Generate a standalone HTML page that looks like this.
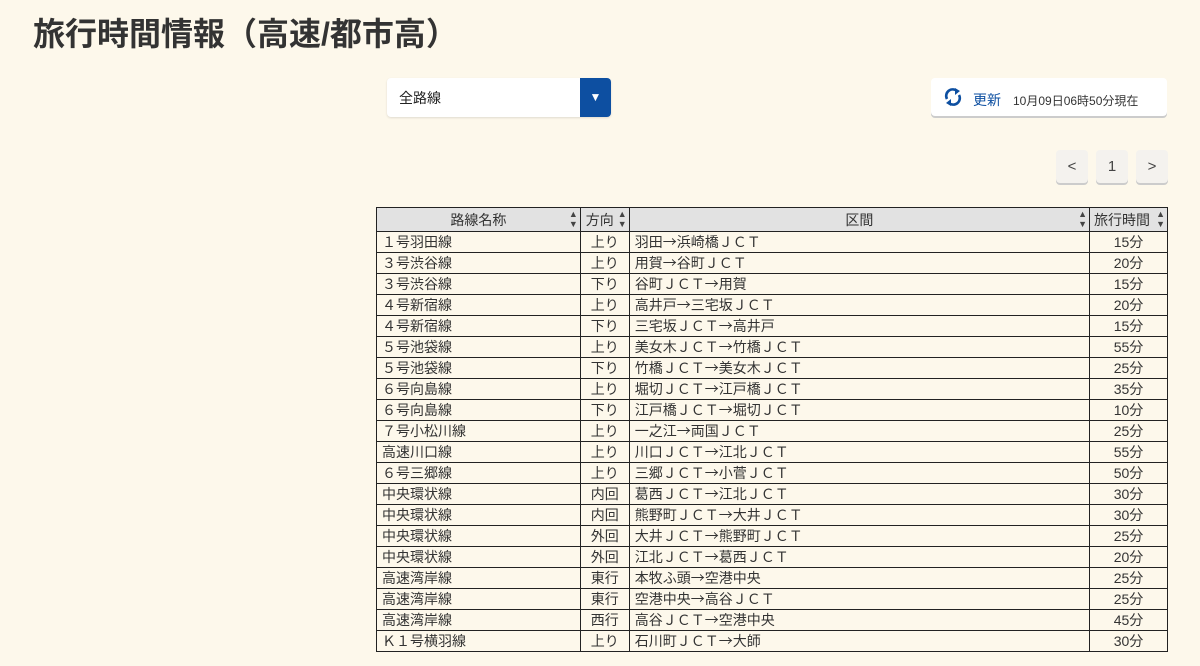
<!DOCTYPE html>
<html><head><meta charset="utf-8"><style>
body{margin:0;width:1200px;height:666px;background:#fdf8eb;font-family:"Liberation Sans","Noto Sans CJK JP",sans-serif;color:#333;position:relative;overflow:hidden}
h1{position:absolute;left:33px;top:9px;margin:0;font-size:32px;font-weight:bold;color:#333;letter-spacing:0}
.sel{position:absolute;left:387px;top:78px;width:224px;height:39px;background:#fff;border-radius:4px;box-shadow:0 1px 2px rgba(0,0,0,.12)}
.sel span{position:absolute;left:12px;top:10px;font-size:14px;color:#222}
.sel b{position:absolute;right:0;top:0;width:31px;height:39px;background:#0d4fa1;border-radius:0 4px 4px 0;color:#fff;font-size:12px;text-align:center;line-height:39px}
.upd{position:absolute;left:931px;top:78px;width:236px;height:38px;background:#fff;border-radius:4px;box-shadow:0 2px 0 #ccc}
.upd .t{position:absolute;left:42px;top:12px;font-size:14px;color:#0d4fa1}
.upd .d{position:absolute;left:82px;top:14px;font-size:12px;color:#333}
.pg{position:absolute;top:150px;width:32px;height:33px;background:#f4f2ee;border-radius:4px;box-shadow:0 2px 0 #ccc;text-align:center;line-height:33px;font-size:15px;color:#444}
table{position:absolute;left:376px;top:207px;width:792px;border-collapse:collapse;border:1.5px solid #222;font-size:14px}
td,th{border:1px solid #222;padding:0 5px;height:20px;line-height:20px;white-space:nowrap;font-weight:normal}
th{background:#e2e2e2;height:23px;position:relative;text-align:center}
th i{position:absolute;right:2px;top:1px;font-style:normal;font-size:9px;line-height:10px;color:#444}
td:nth-child(2),td:nth-child(4){text-align:center}
a{font-family:"Noto Sans CJK JP",sans-serif;text-decoration:none;color:inherit}
</style></head><body>
<h1>旅行時間情報（高速/都市高）</h1>
<div class="sel"><span>全路線</span><b>▼</b></div>
<div class="upd"><svg style="position:absolute;left:12px;top:9px" width="20" height="20" viewBox="0 0 20 20"><path d="M4 12 A6.5 6.5 0 0 1 14 4" fill="none" stroke="#0d4fa1" stroke-width="2.6"/><path d="M12 1 L17 4 L12 8Z" fill="#0d4fa1"/><path d="M16 8 A6.5 6.5 0 0 1 6 16" fill="none" stroke="#0d4fa1" stroke-width="2.6"/><path d="M8 19 L3 16 L8 12Z" fill="#0d4fa1"/></svg><span class="t">更新</span><span class="d">10月09日06時50分現在</span></div>
<div class="pg" style="left:1056px">&lt;</div><div class="pg" style="left:1096px">1</div><div class="pg" style="left:1136px">&gt;</div>
<table>
<colgroup><col style="width:204px"><col style="width:49px"><col style="width:461px"><col style="width:78px"></colgroup>
<tr><th>路線名称<i>▲<br>▼</i></th><th style="text-align:left;padding-left:5px">方向<i>▲<br>▼</i></th><th>区間<i>▲<br>▼</i></th><th style="text-align:left;padding-left:4px">旅行時間<i>▲<br>▼</i></th></tr>
<tr><td>１号羽田線</td><td>上り</td><td>羽田<a>→</a>浜崎橋ＪＣＴ</td><td>15分</td></tr>
<tr><td>３号渋谷線</td><td>上り</td><td>用賀<a>→</a>谷町ＪＣＴ</td><td>20分</td></tr>
<tr><td>３号渋谷線</td><td>下り</td><td>谷町ＪＣＴ<a>→</a>用賀</td><td>15分</td></tr>
<tr><td>４号新宿線</td><td>上り</td><td>高井戸<a>→</a>三宅坂ＪＣＴ</td><td>20分</td></tr>
<tr><td>４号新宿線</td><td>下り</td><td>三宅坂ＪＣＴ<a>→</a>高井戸</td><td>15分</td></tr>
<tr><td>５号池袋線</td><td>上り</td><td>美女木ＪＣＴ<a>→</a>竹橋ＪＣＴ</td><td>55分</td></tr>
<tr><td>５号池袋線</td><td>下り</td><td>竹橋ＪＣＴ<a>→</a>美女木ＪＣＴ</td><td>25分</td></tr>
<tr><td>６号向島線</td><td>上り</td><td>堀切ＪＣＴ<a>→</a>江戸橋ＪＣＴ</td><td>35分</td></tr>
<tr><td>６号向島線</td><td>下り</td><td>江戸橋ＪＣＴ<a>→</a>堀切ＪＣＴ</td><td>10分</td></tr>
<tr><td>７号小松川線</td><td>上り</td><td>一之江<a>→</a>両国ＪＣＴ</td><td>25分</td></tr>
<tr><td>高速川口線</td><td>上り</td><td>川口ＪＣＴ<a>→</a>江北ＪＣＴ</td><td>55分</td></tr>
<tr><td>６号三郷線</td><td>上り</td><td>三郷ＪＣＴ<a>→</a>小菅ＪＣＴ</td><td>50分</td></tr>
<tr><td>中央環状線</td><td>内回</td><td>葛西ＪＣＴ<a>→</a>江北ＪＣＴ</td><td>30分</td></tr>
<tr><td>中央環状線</td><td>内回</td><td>熊野町ＪＣＴ<a>→</a>大井ＪＣＴ</td><td>30分</td></tr>
<tr><td>中央環状線</td><td>外回</td><td>大井ＪＣＴ<a>→</a>熊野町ＪＣＴ</td><td>25分</td></tr>
<tr><td>中央環状線</td><td>外回</td><td>江北ＪＣＴ<a>→</a>葛西ＪＣＴ</td><td>20分</td></tr>
<tr><td>高速湾岸線</td><td>東行</td><td>本牧ふ頭<a>→</a>空港中央</td><td>25分</td></tr>
<tr><td>高速湾岸線</td><td>東行</td><td>空港中央<a>→</a>高谷ＪＣＴ</td><td>25分</td></tr>
<tr><td>高速湾岸線</td><td>西行</td><td>高谷ＪＣＴ<a>→</a>空港中央</td><td>45分</td></tr>
<tr><td>Ｋ１号横羽線</td><td>上り</td><td>石川町ＪＣＴ<a>→</a>大師</td><td>30分</td></tr>
</table>
</body></html>
